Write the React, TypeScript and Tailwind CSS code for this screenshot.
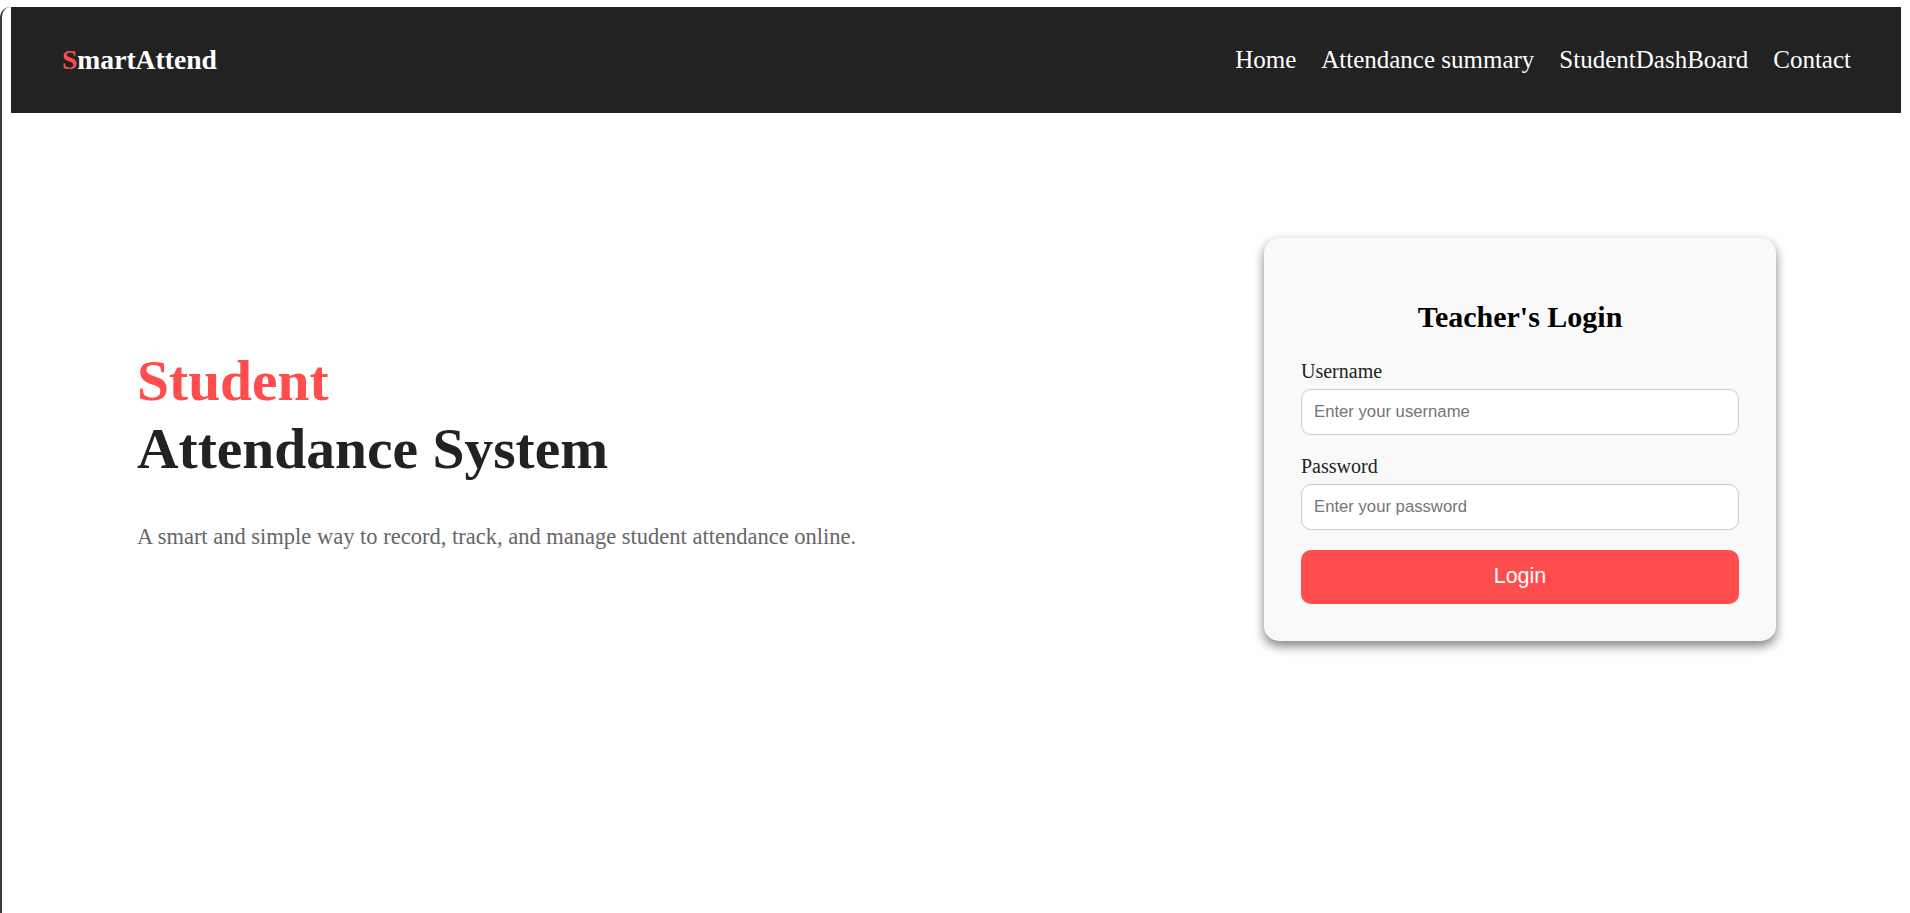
const serif = { fontFamily: '"Liberation Serif", "Times New Roman", serif' };
const sans = { fontFamily: '"Liberation Sans", Arial, sans-serif' };

const links = ["Home", "Attendance summary", "StudentDashBoard", "Contact"];

function Navbar() {
  return (
    <nav className="mx-[9px] mt-[7px] flex h-[106px] items-center justify-between bg-[#222222] pr-[50px] pl-[51px] text-white">
      <div className="text-[27.6px] font-bold">
        <span className="text-[#ff4d4d]">S</span>martAttend
      </div>
      <ul className="flex gap-[25px] text-[25px]">
        {links.map((l) => (
          <li key={l}>
            <a href="#" className="text-white">
              {l}
            </a>
          </li>
        ))}
      </ul>
    </nav>
  );
}

function LoginCard() {
  const input =
    "h-[46px] w-full rounded-[10px] border border-[#cccccc] bg-white px-[12px] text-[16.7px] text-[#222] placeholder:text-[#757575] outline-none";
  return (
    <div className="w-[512px] rounded-[15px] bg-[#f9f9f9] px-[37px] pt-[37px] pb-[37px] shadow-[0_5px_11px_rgba(0,0,0,0.5)]">
      <h2 className="my-[25px] text-center text-[30px] leading-[1.15] font-bold text-black">
        Teacher's Login
      </h2>
      <label className="mb-[6px] block text-[20px] leading-[23px] text-[#222]">
        Username
      </label>
      <input type="text" placeholder="Enter your username" className={input} style={sans} />
      <label className="mt-[20px] mb-[6px] block text-[20px] leading-[23px] text-[#222]">
        Password
      </label>
      <input type="password" placeholder="Enter your password" className={input} style={sans} />
      <button
        type="button"
        className="mt-[20px] h-[54px] w-full rounded-[10px] bg-[#ff4d4d] text-[21.5px] text-white"
        style={sans}
      >
        Login
      </button>
    </div>
  );
}

export default function App() {
  return (
    <div
      className="min-h-screen rounded-tl-[10px] border-l-2 border-[#3c3c3c] bg-white"
      style={serif}
    >
      <Navbar />
      <main className="flex items-center justify-between pt-[125px] pr-[134px] pl-[135px]">
        <div className="mt-[18px]">
          <h1 className="text-[57.5px] leading-[1.19] font-bold text-[#222222]">
            <span className="block text-[#ff4d4d]">Student</span>
            Attendance System
          </h1>
          <p className="mt-[40px] text-[22.5px] leading-[1.15] text-[#666666]">
            A smart and simple way to record, track, and manage student attendance online.
          </p>
        </div>
        <LoginCard />
      </main>
    </div>
  );
}
